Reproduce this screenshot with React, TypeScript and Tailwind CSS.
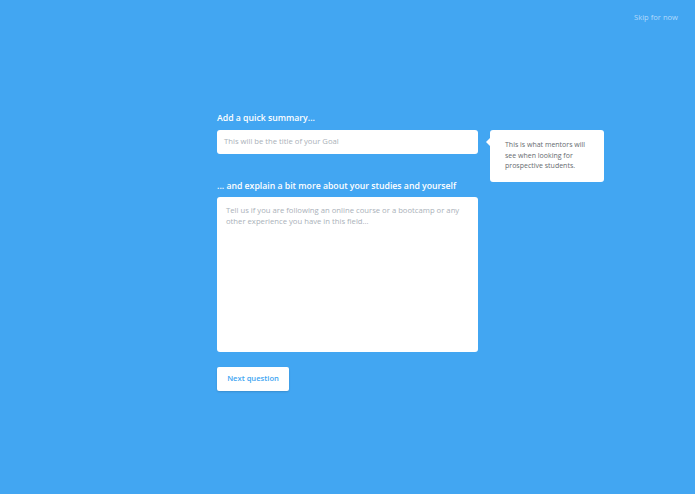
import React from "react";

export default function App() {
  return (
    <div
      className="w-[695px] h-[494px] bg-[#42a6f2] relative overflow-hidden"
      style={{ fontFamily: '"Open Sans", "Liberation Sans", sans-serif' }}
    >
      <div className="absolute right-[17px] top-[12px] text-[7.6px] text-[#b3dafc]">Skip for now</div>
      <div className="pt-[111px] pl-[217px] flex">
        <div className="w-[261px] flex flex-col">
          <div className="text-[8.7px] font-semibold text-white leading-[14px]">Add a quick summary...</div>
          <div className="mt-[5px] h-[24px] bg-white rounded-[3px] flex items-center px-[7px] text-[7.7px] text-[#aab1b9]">
            This will be the title of your Goal
          </div>
          <div className="mt-[25px] text-[8.7px] font-semibold text-white leading-[14px]">
            ... and explain a bit more about your studies and yourself
          </div>
          <div className="mt-[4px] h-[155px] bg-white rounded-[3px] pl-[9px] pr-[8px] pt-[8px] text-[7.7px] leading-[11px] text-[#aab1b9]">
            Tell us if you are following an online course or a bootcamp or any other experience you have in this field...
          </div>
          <div className="mt-[15px]">
            <div className="w-[72px] h-[24px] bg-white rounded-[2px] shadow-[0_1px_2px_rgba(0,0,0,0.15)] flex items-center justify-center text-[7.6px] font-semibold text-[#42a6f2]">
              Next question
            </div>
          </div>
        </div>
        <div className="ml-[12px] mt-[19px] relative">
          <div className="absolute left-[-4px] top-[8px] w-0 h-0 border-y-[4px] border-y-transparent border-r-[4px] border-r-white" />
          <div className="w-[114px] h-[52px] bg-white rounded-[3px] pl-[15px] pr-[8px] pt-[10px] text-[7px] leading-[10.5px] text-[#666b70]">
            This is what mentors will see when looking for prospective students.
          </div>
        </div>
      </div>
    </div>
  );
}
